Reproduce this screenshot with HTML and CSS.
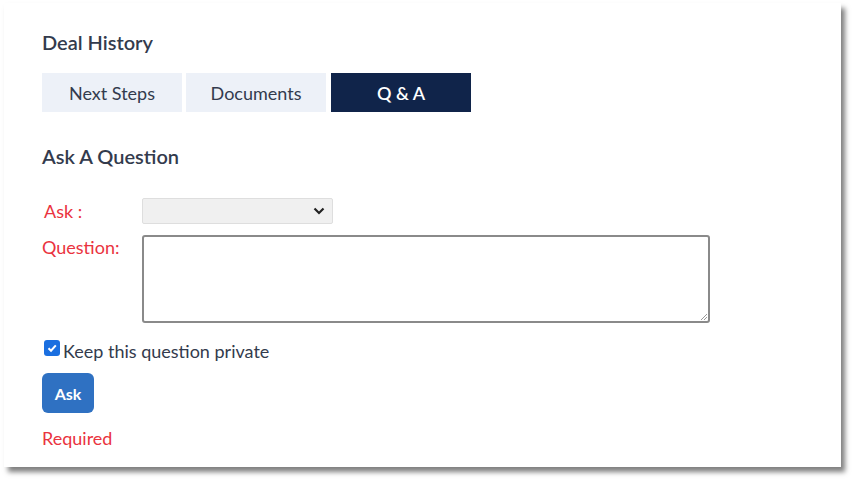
FILE: index.html
```html
<!DOCTYPE html>
<html>
<head>
<meta charset="utf-8">
<link rel="stylesheet" href="styles.css">
</head>
<body>
<div class="card">
  <h2 class="title">Deal History</h2>
  <div class="tabs">
    <div class="tab">Next Steps</div>
    <div class="tab">Documents</div>
    <div class="tab active">Q &amp; A</div>
  </div>
  <h3 class="subtitle">Ask A Question</h3>
  <div class="row row-ask">
    <label class="label">Ask :</label>
    <div class="select"><svg class="chev" width="12" height="8" viewBox="0 0 12 8"><path d="M1.5 1.5 L6 6 L10.5 1.5" fill="none" stroke="#222" stroke-width="2.2"/></svg></div>
  </div>
  <div class="row row-q">
    <label class="label">Question:</label>
    <div class="textarea"><svg class="grip" width="10" height="10" viewBox="0 0 10 10"><path d="M9 3 L3 9 M9 6 L6 9" stroke="#999" stroke-width="1"/></svg></div>
  </div>
  <div class="check-row">
    <span class="check"><svg width="12" height="12" viewBox="0 0 12 12"><path d="M2.5 6.2 L5 8.7 L9.8 3.3" fill="none" stroke="#fff" stroke-width="2"/></svg></span>
    <span class="check-text">Keep this question private</span>
  </div>
  <button class="btn">Ask</button>
  <div class="required">Required</div>
</div>
</body>
</html>
```
FILE: styles.css
```css
html, body { margin: 0; padding: 0; background: #fff; }
body { font-family: Lato, "Noto Sans", sans-serif; padding: 3px 0 13px 4px; }
.card {
  width: 837px;
  height: 464px;
  box-sizing: border-box;
  background: #fff;
  box-shadow: 4px 5px 5px rgba(0,0,0,0.5);
  padding: 27px 0 0 38px;
  color: #333b4d;
}
.title { margin: 0; font-size: 20px; font-weight: 600; line-height: 24px; }
.tabs { display: flex; gap: 4px; margin-top: 19px; }
.tab {
  width: 140px; height: 39px;
  background: #edf1f8;
  display: flex; align-items: center; justify-content: center;
  font-size: 18px; color: #333b4d;
}
.tab.active { background: #10244a; color: #fff; margin-left: 1px; font-weight: 600; }
.subtitle { margin: 32px 0 0; font-size: 20px; font-weight: 600; line-height: 24px; }
.row { display: flex; }
.label { width: 100px; color: #ea3340; font-size: 18px; line-height: 22px; }
.row-ask { margin-top: 30px; align-items: center; }
.row-ask .label { padding-left: 2px; width: 98px; }
.select {
  width: 191px; height: 26px; box-sizing: border-box;
  background: #f0f0f0; border: 1px solid #dedede; border-radius: 2px;
  display: flex; align-items: center; justify-content: flex-end; padding-right: 7px;
}
.row-q { margin-top: 11px; }
.row-q .label { padding-top: 1px; }
.textarea {
  width: 568px; height: 88px; box-sizing: border-box;
  border: 2px solid #8a8a8a; border-radius: 3px; background: #fff;
  position: relative;
}
.grip { position: absolute; right: 0; bottom: 0; }
.check-row { display: flex; align-items: flex-end; margin-top: 17px; margin-left: 2px; }
.check {
  width: 16px; height: 16px; box-sizing: border-box; border-radius: 3px;
  background: #1a6fe0; display: flex; align-items: center; justify-content: center;
  margin-bottom: 6px;
}
.check-text { font-size: 18px; color: #333b4d; margin-left: 3px; line-height: 22px; }
.btn {
  display: block; margin-top: 11px;
  width: 52px; height: 40px; border: none; border-radius: 6px;
  background: #2f71c2; color: #fff; font-family: Lato, sans-serif;
  font-size: 16px; font-weight: 700; padding: 0;
}
.required { margin-top: 14px; color: #ea3340; font-size: 18px; line-height: 22px; }
```
